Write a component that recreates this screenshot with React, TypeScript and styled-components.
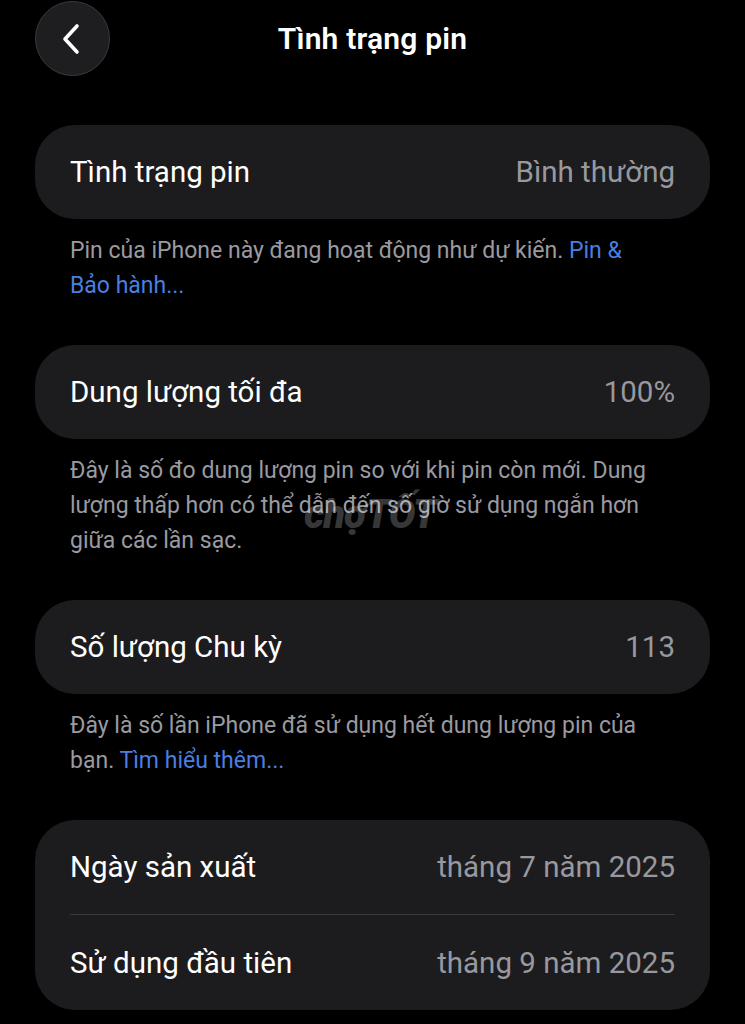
import styled, { createGlobalStyle } from 'styled-components'

const GlobalStyle = createGlobalStyle`
  body {
    margin: 0;
    background: #000;
    font-family: Roboto, 'Noto Sans', sans-serif;
    -webkit-font-smoothing: antialiased;
  }
`

interface Row {
  label: string
  value: string
}

interface Section {
  rows: Row[]
  note?: string
  link?: string
}

const sections: Section[] = [
  {
    rows: [{ label: 'Tình trạng pin', value: 'Bình thường' }],
    note: 'Pin của iPhone này đang hoạt động như dự kiến. ',
    link: 'Pin & Bảo hành...',
  },
  {
    rows: [{ label: 'Dung lượng tối đa', value: '100%' }],
    note: 'Đây là số đo dung lượng pin so với khi pin còn mới. Dung lượng thấp hơn có thể dẫn đến số giờ sử dụng ngắn hơn giữa các lần sạc.',
  },
  {
    rows: [{ label: 'Số lượng Chu kỳ', value: '113' }],
    note: 'Đây là số lần iPhone đã sử dụng hết dung lượng pin của bạn. ',
    link: 'Tìm hiểu thêm...',
  },
  {
    rows: [
      { label: 'Ngày sản xuất', value: 'tháng 7 năm 2025' },
      { label: 'Sử dụng đầu tiên', value: 'tháng 9 năm 2025' },
    ],
  },
]

export default function App() {
  return (
    <>
      <GlobalStyle />
      <Page>
        <Header>
          <BackButton aria-label="Quay lại">
            <svg width="22" height="32" viewBox="0 0 22 32" fill="none">
              <path d="M17 3 L5 16 L17 29" stroke="#fff" strokeWidth="3.6" strokeLinecap="round" strokeLinejoin="round" />
            </svg>
          </BackButton>
          <Title>Tình trạng pin</Title>
        </Header>
        <Content>
          {sections.map((section, i) => (
            <Group key={i}>
              <Card>
                {section.rows.map((row, j) => (
                  <CardRow key={row.label} $divided={j > 0}>
                    <Label>{row.label}</Label>
                    <Value>{row.value}</Value>
                  </CardRow>
                ))}
              </Card>
              {section.note && (
                <Note>
                  {section.note}
                  {section.link && <Link>{section.link}</Link>}
                </Note>
              )}
            </Group>
          ))}
        </Content>
        <Watermark>chợTỐT</Watermark>
      </Page>
    </>
  )
}

const Page = styled.div`
  position: relative;
  width: 745px;
  height: 1024px;
  overflow: hidden;
  background: #000;
  color: #fff;
`
const Header = styled.div`
  position: relative;
  height: 77px;
  display: flex;
  align-items: center;
  justify-content: center;
`
const BackButton = styled.button`
  position: absolute;
  left: 35px;
  top: 1px;
  width: 75px;
  height: 75px;
  border-radius: 50%;
  border: 1px solid #3a3a3c;
  background: #1e1e20;
  display: flex;
  align-items: center;
  justify-content: center;
  padding: 0 4px 0 0;
`
const Title = styled.h1`
  margin: 0;
  font-size: 30px;
  font-weight: 600;
  letter-spacing: 0.2px;
`
const Content = styled.div`
  display: flex;
  flex-direction: column;
  gap: 42px;
  padding: 48px 35px 0;
`
const Group = styled.div`
  display: flex;
  flex-direction: column;
  gap: 14px;
`
const Card = styled.div`
  background: #1c1c1e;
  border-radius: 40px;
  padding: 0 35px;
`
const CardRow = styled.div<{ $divided: boolean }>`
  height: ${(p) => (p.$divided ? 95 : 94)}px;
  display: flex;
  align-items: center;
  justify-content: space-between;
  border-top: ${(p) => (p.$divided ? '1px solid #3a3a3c' : 'none')};
  font-size: 29.5px;
`
const Label = styled.span`
  color: #fff;
`
const Value = styled.span`
  color: #98989f;
`
const Note = styled.p`
  margin: 0;
  padding: 0 45px 0 35px;
  font-size: 23px;
  line-height: 35px;
  color: #9a9aa0;
`
const Link = styled.span`
  color: #4a7fe0;
`
const Watermark = styled.div`
  position: absolute;
  left: 304px;
  top: 491px;
  font-size: 40px;
  font-weight: 900;
  font-style: italic;
  color: rgba(255, 255, 255, 0.22);
  pointer-events: none;
  letter-spacing: -1px;
`
